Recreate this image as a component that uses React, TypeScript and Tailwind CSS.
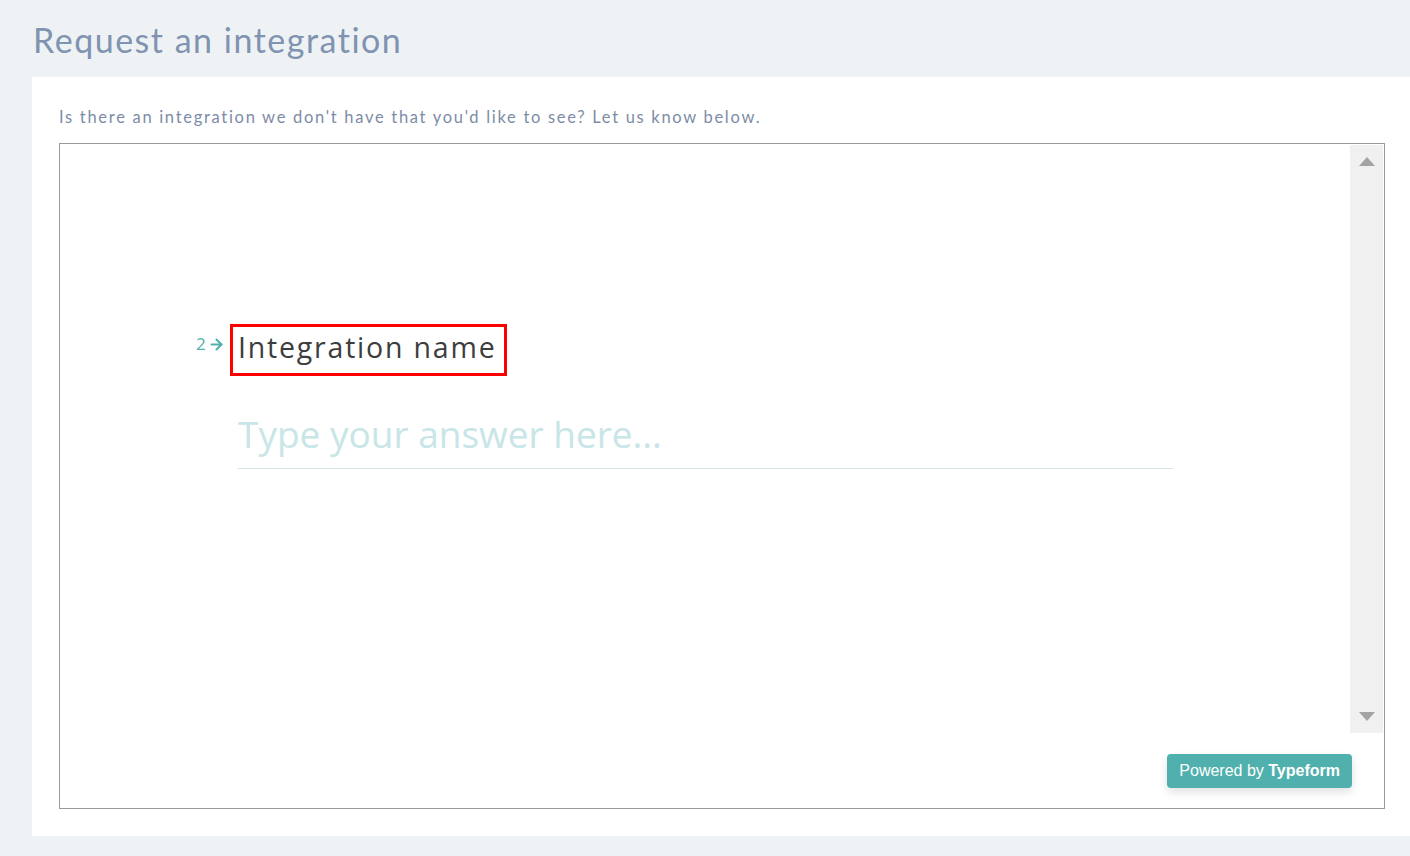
import { ArrowRight } from 'lucide-react'

function ScrollTrack() {
  return (
    <div className="flex h-[588px] w-[33px] shrink-0 flex-col items-center justify-between bg-[#f0f0f0] py-[12px]">
      <svg width="16" height="9" viewBox="0 0 16 9">
        <path d="M8 0 L16 9 L0 9 Z" fill="#a3a3a3" />
      </svg>
      <svg width="16" height="9" viewBox="0 0 16 9">
        <path d="M0 0 L16 0 L8 9 Z" fill="#a3a3a3" />
      </svg>
    </div>
  )
}

export default function App() {
  return (
    <div className="min-h-[856px] w-[1410px] bg-[#eef2f5] pb-[20px] font-['Lato',sans-serif]">
      {/* Page title */}
      <h1 className="pl-[33px] pt-[17px] pb-[14px] text-[34px] leading-[46px] tracking-[1.5px] text-[#8093b0]">
        Request an integration
      </h1>

      {/* Card */}
      <div className="ml-[32px] bg-white pl-[27px] pr-[25px] pt-[28px] pb-[27px]">
        <p className="text-[16.5px] leading-[24px] tracking-[1.7px] text-[#7d8ca6]">
          Is there an integration we don't have that you'd like to see? Let us know below.
        </p>

        {/* Embedded form */}
        <div className="mt-[14px] flex h-[666px] border border-[#9a9a9a] pt-px pr-px">
          <div className="relative flex-1 pl-[136px]">
            <div className="pt-[179px]">
              <div className="flex items-start font-['Open_Sans',sans-serif]">
                <span className="mt-[8px] flex w-[34px] items-center text-[17px] leading-[24px] text-[#4fb0ae]">
                  2
                  <ArrowRight className="ml-[2px] h-[17px] w-[17px]" strokeWidth={3} />
                </span>
                <div className="border-[3px] border-[#ff0000] pl-[5px] pr-[8px] pt-0 pb-[6px]">
                  <span className="text-[28.5px] leading-[40px] tracking-[1.8px] text-[#3d3d3d]">
                    Integration name
                  </span>
                </div>
              </div>
              <div className="ml-[42px] mr-[177px] mt-[30px] border-b border-[#d5e9ea] pb-[6px]">
                <span className="font-['Open_Sans',sans-serif] text-[37px] leading-[56px] tracking-[0px] text-[#c8e5e7]">
                  Type your answer here...
                </span>
              </div>
            </div>

            {/* Powered by badge */}
            <div className="absolute bottom-[20px] right-[-2px] rounded-[4px] bg-[#4fb0ae] px-[12px] py-[6px] font-['Liberation_Sans',sans-serif] text-[16px] leading-[22px] text-white shadow-[0_4px_10px_rgba(0,0,0,0.12)]">
              Powered by <span className="font-bold">Typeform</span>
            </div>
          </div>
          <ScrollTrack />
        </div>
      </div>
    </div>
  )
}
